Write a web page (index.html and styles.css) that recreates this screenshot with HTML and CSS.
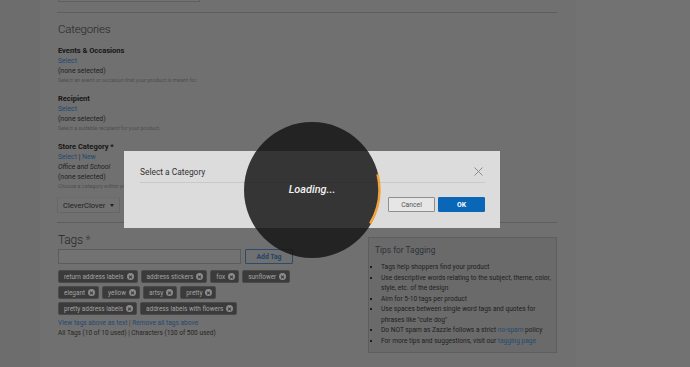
FILE: index.html
```html
<!DOCTYPE html>
<html lang="en">
<head>
    <meta charset="UTF-8">
    <title>Edit Product - Categories and Tags</title>
    <link rel="stylesheet" href="styles.css">
</head>
<body>
    <div class="page">
        <div class="side"></div>

        <div class="main">
            <div class="top-field"></div>
            <div class="rule"></div>

            <h2 class="section-title">Categories</h2>

            <div class="field-group">
                <div class="field-label">Events &amp; Occasions</div>
                <div class="field-line"><a href="#">Select</a></div>
                <div class="field-line">(none selected)</div>
                <div class="field-hint">Select an event or occasion that your product is meant for.</div>
            </div>

            <div class="field-group">
                <div class="field-label">Recipient</div>
                <div class="field-line"><a href="#">Select</a></div>
                <div class="field-line">(none selected)</div>
                <div class="field-hint">Select a suitable recipient for your product.</div>
            </div>

            <div class="field-group">
                <div class="field-label">Store Category *</div>
                <div class="field-line"><a href="#">Select</a> | <a href="#">New</a></div>
                <div class="field-line italic">Office and School</div>
                <div class="field-line">(none selected)</div>
                <div class="field-hint">Choose a category within your store for this product.</div>
            </div>

            <button class="store-select">CleverClover <span class="caret"></span></button>

            <div class="rule rule-low"></div>

            <div class="tags-row">
                <div class="tags-col">
                    <h2 class="section-title tags-title">Tags <span class="req">*</span></h2>
                    <div class="tag-entry">
                        <input class="tag-input" type="text">
                        <button class="add-tag">Add Tag</button>
                    </div>
                    <div class="chips">
                        <span class="chip">return address labels<i class="chip-x"></i></span>
                        <span class="chip">address stickers<i class="chip-x"></i></span>
                        <span class="chip">fox<i class="chip-x"></i></span>
                        <span class="chip">sunflower<i class="chip-x"></i></span>
                        <span class="chip">elegant<i class="chip-x"></i></span>
                        <span class="chip">yellow<i class="chip-x"></i></span>
                        <span class="chip">artsy<i class="chip-x"></i></span>
                        <span class="chip">pretty<i class="chip-x"></i></span>
                        <span class="chip">pretty address labels<i class="chip-x"></i></span>
                        <span class="chip">address labels with flowers<i class="chip-x"></i></span>
                    </div>
                    <div class="tag-links"><a href="#">View tags above as text</a> <span class="sep">|</span> <a href="#">Remove all tags above</a></div>
                    <div class="tag-count">All Tags (10 of 10 used) | Characters (130 of 500 used)</div>
                </div>

                <div class="tips">
                    <h3>Tips for Tagging</h3>
                    <ul>
                        <li>Tags help shoppers find your product</li>
                        <li>Use descriptive words relating to the subject, theme, color, style, etc. of the design</li>
                        <li>Aim for 5-10 tags per product</li>
                        <li>Use spaces between single word tags and quotes for phrases like "cute dog"</li>
                        <li>Do NOT spam as Zazzle follows a strict <a href="#">no-spam</a> policy</li>
                        <li>For more tips and suggestions, visit our <a href="#">tagging page</a></li>
                    </ul>
                </div>
            </div>
        </div>
    </div>

    <div class="modal">
        <div class="modal-head">
            <span class="modal-title">Select a Category</span>
            <svg class="modal-close" width="9" height="9" viewBox="0 0 9 9">
                <path d="M0.5 0.5 L8.5 8.5 M8.5 0.5 L0.5 8.5" stroke="#8a8a8a" stroke-width="1" fill="none"/>
            </svg>
        </div>
        <div class="modal-foot">
            <button class="btn btn-cancel">Cancel</button>
            <button class="btn btn-ok">OK</button>
        </div>
    </div>

    <div class="loader">
        <svg width="138" height="138" viewBox="0 0 138 138">
            <circle cx="69" cy="69" r="68" fill="rgba(20,20,20,0.84)"/>
            <!-- spinner arc on the right edge -->
            <path d="M134.6 53.2 A67 67 0 0 1 127.2 102.5" stroke="#f2a43a" stroke-width="2.5" fill="none"/>
        </svg>
        <span class="loader-text">Loading...</span>
    </div>
</body>
</html>
```

FILE: styles.css
```css
body {
    margin: 0;
    background: #727272;
    font-family: Roboto, "Liberation Sans", sans-serif;
    color: #1e1e1e;
    overflow: hidden;
}

a {
    color: #234a70;
    text-decoration: none;
}

.page {
    display: flex;
    height: 367px;
}

.side {
    width: 40px;
    background: #6d6d6d;
}

.main {
    width: 499px;
    padding: 0 19px 0 18px;
    background: #707070;
}

.top-field {
    width: 140px;
    height: 1px;
    border: 1px solid #5f5f5f;
    border-top: none;
    background: #727272;
}

.rule {
    margin-top: 10px;
    border-top: 1px solid #5e5e5e;
    margin-left: -1px;
}

.section-title {
    margin: 9px 0 9px 0;
    font-size: 11.5px;
    line-height: 14px;
    font-weight: 300;
    color: #262626;
    letter-spacing: -0.2px;
}

.field-group {
    margin-bottom: 8px;
    font-size: 6.9px;
}

.field-label {
    font-weight: 700;
    font-size: 7.5px;
    line-height: 11px;
    color: #161616;
}

.field-line {
    line-height: 10px;
}

.italic {
    font-style: italic;
}

.field-hint {
    font-size: 5.4px;
    line-height: 9px;
    color: #4e4e4e;
}

.store-select {
    display: block;
    margin-top: -2px;
    margin-left: -1px;
    width: 63px;
    height: 16px;
    padding: 0 0 0 5px;
    text-align: left;
    background: #717171;
    border: 1px solid #666;
    border-top-color: #6c6c6c;
    border-radius: 1px;
    font-family: Roboto, sans-serif;
    font-size: 7.6px;
    color: #222;
}

.caret {
    display: inline-block;
    margin-left: 3px;
    vertical-align: middle;
    border-left: 2.5px solid transparent;
    border-right: 2.5px solid transparent;
    border-top: 3px solid #222;
}

.rule-low {
    margin-top: 9px;
}

.tags-row {
    display: flex;
    justify-content: space-between;
    align-items: flex-start;
}

.tags-col {
    width: 242px;
}

.tags-title {
    margin: 10px 0 2px 0;
    font-size: 12px;
}

.req {
    color: #3c3c3c;
}

.tag-entry {
    display: flex;
    align-items: center;
    gap: 4px;
}

.tag-input {
    width: 181px;
    height: 13px;
    margin: 0;
    padding: 0;
    border: 1px solid #5c5c5c;
    background: #727272;
}

.add-tag {
    width: 48px;
    height: 15px;
    padding: 0;
    background: #707070;
    border: 1px solid #294c6e;
    border-radius: 1px;
    font-family: Roboto, sans-serif;
    font-size: 6.8px;
    font-weight: 700;
    color: #1f4366;
}

.chips {
    display: flex;
    flex-wrap: wrap;
    gap: 3px 3px;
    margin-top: 6px;
    width: 238.5px;
}

.chip {
    display: inline-flex;
    align-items: center;
    height: 13px;
    padding: 0 3px 0 5px;
    background: #3b3b3b;
    border: 1px solid #4a4a4a;
    border-radius: 2px;
    box-sizing: border-box;
    font-size: 6.4px;
    color: #a3a3a3;
}

.chip-x {
    position: relative;
    width: 7px;
    height: 7px;
    margin-left: 3px;
    border-radius: 50%;
    background: #8c8c8c;
}

.chip-x::before,
.chip-x::after {
    content: "";
    position: absolute;
    left: 3px;
    top: 1.5px;
    width: 1px;
    height: 4px;
    background: #3b3b3b;
    transform: rotate(45deg);
}

.chip-x::after {
    transform: rotate(-45deg);
}

.tag-links {
    margin-top: 3px;
    font-size: 6.6px;
    line-height: 10px;
}

.sep {
    color: #3a3a3a;
}

.tag-count {
    font-size: 6.5px;
    line-height: 10px;
    color: #262626;
}

.tips {
    width: 179px;
    margin: 14px 0 0 0;
    padding: 4px 2px 6px 6px;
    background: #6a6a6a;
    border: 1px solid #5e5e5e;
}

.tips h3 {
    margin: 2px 0 6px 0;
    font-size: 8.4px;
    line-height: 12px;
    font-weight: 400;
    color: #2e3339;
}

.tips ul {
    margin: 0;
    padding: 0 0 0 7px;
    list-style: square;
    font-size: 6.6px;
    line-height: 10.5px;
    color: #1e1e1e;
}

.tips li {
    margin-left: -1px;
}

.modal {
    position: fixed;
    left: 124px;
    top: 151px;
    width: 376px;
    height: 77px;
    box-sizing: border-box;
    padding: 0 15px 0 16px;
    background: #dcdcdc;
}

.modal-head {
    display: flex;
    justify-content: space-between;
    align-items: flex-end;
    height: 27px;
    padding-bottom: 4px;
    border-bottom: 1px solid #c9c9c9;
}

.modal-title {
    font-size: 8.4px;
    line-height: 12px;
    color: #333;
}

.modal-close {
    margin: 0 2px 2px 0;
}

.modal-foot {
    display: flex;
    justify-content: flex-end;
    gap: 3px;
    margin-top: 14px;
}

.btn {
    width: 47px;
    height: 15px;
    padding: 0;
    border-radius: 1px;
    font-family: Roboto, sans-serif;
    font-size: 6.8px;
}

.btn-cancel {
    background: #e6e6e6;
    border: 1px solid #8e8e8e;
    color: #555;
}

.btn-ok {
    background: #0a67b8;
    border: 1px solid #0a67b8;
    color: #fff;
    font-weight: 700;
}

.loader {
    position: fixed;
    left: 243px;
    top: 121px;
    width: 138px;
    height: 138px;
}

.loader svg {
    display: block;
}

.loader-text {
    position: absolute;
    left: 0;
    right: 0;
    top: 62px;
    text-align: center;
    font-size: 10.9px;
    font-style: italic;
    font-weight: 500;
    color: #f2f2f2;
    line-height: 14px;
}
```
